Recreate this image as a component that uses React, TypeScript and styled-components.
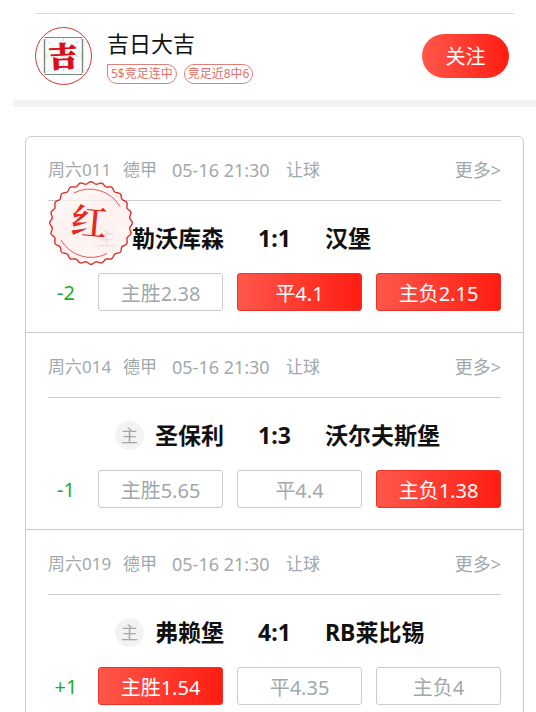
import React from 'react';
import styled, { createGlobalStyle, css } from 'styled-components';

const GlobalStyle = createGlobalStyle`
  * { box-sizing: border-box; }
  body {
    margin: 0;
    background: #fff;
    color: #111;
    font-family: "Noto Sans", "Noto Sans CJK SC", sans-serif;
  }
  button { font-family: inherit; cursor: pointer; }
`;

const redGradient = 'linear-gradient(90deg, #ff574b, #ff1d12)';

const Page = styled.main`
  padding-top: 13px;
  height: 100vh;
  overflow: hidden;
`;

const Header = styled.header`
  display: flex;
  align-items: center;
  margin: 0 22px 0 35px;
  padding: 13px 5px 15px 0;
  border-top: 1px solid #d9dbdb;
`;

const Profile = styled.div`
  flex: 1;
  margin-left: 15px;
`;

const UserName = styled.h1`
  margin: 0 0 6px;
  font-size: 22px;
  line-height: 30px;
  font-weight: 400;
`;

const Tags = styled.div`
  display: flex;
  gap: 7px;
`;

const Tag = styled.span<{ $notched?: boolean }>`
  height: 20px;
  padding: 0 3px;
  border: 1px solid #df8079;
  border-radius: ${(p) => (p.$notched ? '0 10px 10px 10px' : '10px')};
  color: #df7069;
  font-size: 12px;
  line-height: 18px;
  white-space: nowrap;
`;

const FollowButton = styled.button`
  width: 87px;
  height: 44px;
  padding: 2px 0 0;
  border: 0;
  border-radius: 22px;
  background: ${redGradient};
  color: #fff;
  font-size: 20px;
  line-height: 42px;
`;

const Separator = styled.div`
  height: 7px;
  margin-left: 13px;
  background: #f3f3f3;
`;

const MatchList = styled.section`
  margin: 29px 12px 0 25px;
  border: 1px solid #c8cccd;
  border-radius: 6px;
`;

const Match = styled.article`
  position: relative;
  padding: 16px 22px 21px;
  & + & {
    padding-top: 17px;
    border-top: 1px solid #c8cccd;
  }
`;

const Meta = styled.div`
  display: grid;
  grid-template-columns: 75px 49px 114px 1fr auto;
  align-items: center;
  height: 48px;
  padding-bottom: 14px;
  border-bottom: 1px solid #c8cccd;
  color: #a2a8aa;
  font-size: 17px;
  line-height: 32px;
  white-space: nowrap;
`;

const Kickoff = styled.time`
  font-size: 18px;
`;

const MoreLink = styled.a`
  color: inherit;
  font-size: 18px;
  text-decoration: none;
`;

const Teams = styled.div`
  display: grid;
  grid-template-columns: 1fr 101px 1fr;
  align-items: center;
  height: 72px;
  padding-top: 2px;
  font-size: 23px;
  line-height: 32px;
  font-weight: 700;
  white-space: nowrap;
`;

const HomeTeam = styled.div`
  display: flex;
  align-items: center;
  justify-content: flex-end;
  gap: 11px;
`;

const HomeMark = styled.span`
  width: 29px;
  height: 29px;
  border-radius: 50%;
  background: #f3f3f3;
  color: #a2a8aa;
  font-size: 17px;
  line-height: 29px;
  font-weight: 400;
  text-align: center;
`;

const Score = styled.div`
  text-align: center;
`;

const Odds = styled.div`
  display: grid;
  grid-template-columns: 36px repeat(3, 1fr);
  gap: 14px;
  align-items: center;
  font-size: 20px;
`;

const Handicap = styled.span`
  color: #1cad25;
  text-align: center;
`;

const OddButton = styled.button<{ $picked: boolean }>`
  height: 38px;
  padding: 3px 0 0;
  border: 1px solid #c8cccd;
  border-radius: 3px;
  background: #fff;
  color: #a2a8aa;
  font-size: 20px;
  line-height: 33px;
  white-space: nowrap;
  ${(p) =>
    p.$picked &&
    css`
      border-color: #e8342b;
      background: ${redGradient};
      color: #fff;
    `}
`;

const StampSvg = styled.svg`
  position: absolute;
  left: 22px;
  top: 43px;
  pointer-events: none;
`;

const wavyEdge = (() => {
  const points: string[] = [];
  for (let i = 0; i < 360; i += 1) {
    const a = (i * Math.PI) / 180;
    const r = 40.2 + 1.1 * Math.cos(a * 24);
    points.push(`${(43 + r * Math.cos(a)).toFixed(2)} ${(43 + r * Math.sin(a)).toFixed(2)}`);
  }
  return `M${points.join('L')}Z`;
})();

function Avatar() {
  return (
    <svg width="57" height="58" viewBox="0 0 57 58" role="img" aria-label="吉">
      <ellipse cx="28.5" cy="29" rx="28" ry="28.5" fill="#fdfefd" stroke="#cf3c38" />
      <rect x="9.5" y="10.5" width="38" height="37" fill="#f8fcfb" />
      <path d="M10 11L47 47M47 11L10 47M28.5 11V47M10 29H47" stroke="#d3d9d7" strokeDasharray="3 2" fill="none" />
      <path d="M9.5 10.5H47.5M9.5 47.5H47.5" stroke="#7d8784" />
      <path d="M9.5 12V46M47.5 12V46" stroke="#7d8784" strokeWidth="1.4" />
      <text x="28" y="40" textAnchor="middle" transform="rotate(-3 28 29)" fontFamily='"Noto Serif CJK SC", "Noto Sans CJK SC", serif' fontWeight="900" fontSize="28" fill="#d90d18" stroke="#d90d18" strokeWidth="1">吉</text>
    </svg>
  );
}

function Stamp() {
  return (
    <StampSvg width="86" height="86" viewBox="0 0 86 86" role="img" aria-label="红">
      <defs>
        <linearGradient id="stampFill" x1="0" y1="0" x2="0.7" y2="1">
          <stop offset="0" stopColor="#ffffff" stopOpacity="0.75" />
          <stop offset="0.5" stopColor="#ffeceb" stopOpacity="0.75" />
          <stop offset="1" stopColor="#fff6f5" stopOpacity="0.75" />
        </linearGradient>
      </defs>
      <path d={wavyEdge} fill="url(#stampFill)" stroke="#d9302a" strokeWidth="1.4" />
      <path d="M26 13A34.5 34.5 0 0 1 72 26.7M13 60A34.5 34.5 0 0 0 59 73.5" fill="none" stroke="#d94a45" strokeWidth="0.9" />
      <text x="41" y="55" textAnchor="middle" transform="rotate(5 43 43)" fontFamily='"Noto Serif CJK SC", "Noto Sans CJK SC", serif' fontSize="36" fontWeight="600" fill="#e62920">红</text>
    </StampSvg>
  );
}

interface MatchData {
  id: string;
  home: string;
  score: string;
  away: string;
  handicap: string;
  odds: string[];
  picked: number[];
  stamped?: boolean;
}

const matches: MatchData[] = [
  { id: '周六011', home: '勒沃库森', score: '1:1', away: '汉堡', handicap: '-2', odds: ['主胜2.38', '平4.1', '主负2.15'], picked: [1, 2], stamped: true },
  { id: '周六014', home: '圣保利', score: '1:3', away: '沃尔夫斯堡', handicap: '-1', odds: ['主胜5.65', '平4.4', '主负1.38'], picked: [2] },
  { id: '周六019', home: '弗赖堡', score: '4:1', away: 'RB莱比锡', handicap: '+1', odds: ['主胜1.54', '平4.35', '主负4'], picked: [0] },
];

export default function App() {
  return (
    <Page lang="zh-CN">
      <GlobalStyle />
      <Header>
        <Avatar />
        <Profile>
          <UserName>吉日大吉</UserName>
          <Tags>
            <Tag $notched>5$竞足连中</Tag>
            <Tag>竞足近8中6</Tag>
          </Tags>
        </Profile>
        <FollowButton type="button">关注</FollowButton>
      </Header>
      <Separator />
      <MatchList>
        {matches.map((m) => (
          <Match key={m.id}>
            <Meta>
              <span>{m.id}</span>
              <span>德甲</span>
              <Kickoff>05-16 21:30</Kickoff>
              <span>让球</span>
              <MoreLink href="#">更多&gt;</MoreLink>
            </Meta>
            <Teams>
              <HomeTeam>
                <HomeMark>主</HomeMark>
                <span>{m.home}</span>
              </HomeTeam>
              <Score>{m.score}</Score>
              <span>{m.away}</span>
            </Teams>
            <Odds>
              <Handicap>{m.handicap}</Handicap>
              {m.odds.map((odd, i) => (
                <OddButton key={odd} type="button" $picked={m.picked.includes(i)}>
                  {odd}
                </OddButton>
              ))}
            </Odds>
            {m.stamped && <Stamp />}
          </Match>
        ))}
      </MatchList>
    </Page>
  );
}
